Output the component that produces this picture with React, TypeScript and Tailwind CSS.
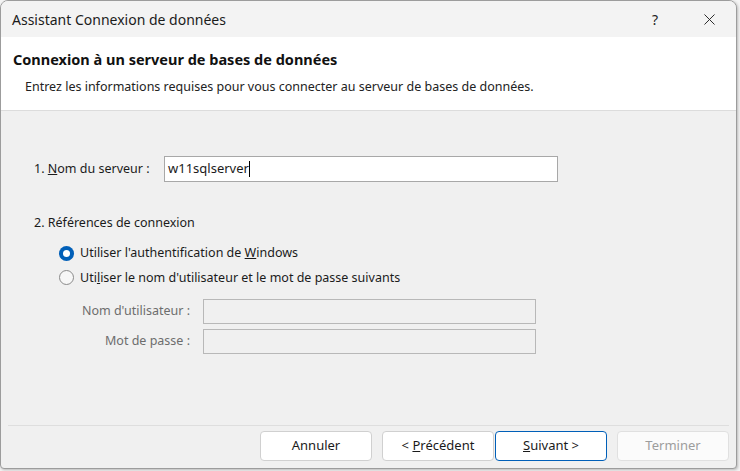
import { X } from "lucide-react";

const font = { fontFamily: '"Noto Sans", "Open Sans", sans-serif' };

const Radio = ({ checked }: { checked: boolean }) =>
  checked ? (
    <span className="w-[15px] h-[15px] rounded-full bg-[#005fb8] flex items-center justify-center shrink-0">
      <span className="w-[7px] h-[7px] rounded-full bg-white" />
    </span>
  ) : (
    <span className="w-[15px] h-[15px] rounded-full border border-[#8a8a8a] bg-[#f7f7f7] shrink-0" />
  );

const Btn = ({ children, primary, disabled }: { children: React.ReactNode; primary?: boolean; disabled?: boolean }) => (
  <button
    className={
      primary
        ? "w-[112px] h-[30px] rounded-[4px] border border-[#005fb8] bg-white text-[13px] text-[#1a1a1a]"
        : disabled
        ? "w-[112px] h-[30px] rounded-[4px] border border-[#e0e0e0] bg-[#fbfbfb] text-[13px] text-[#9d9d9d]"
        : "w-[112px] h-[30px] rounded-[4px] border border-[#d0d0d0] bg-white text-[13px] text-[#1a1a1a]"
    }
  >
    {children}
  </button>
);

export default function App() {
  return (
    <div className="w-[740px] h-[471px] bg-[#f4f4f4]" style={font}>
      <div className="w-[737px] h-[469px] rounded-t-[8px] rounded-b-[4px] border border-[#9c9c9c] bg-[#f0f0f0] flex flex-col overflow-hidden shadow-[1px_1px_3px_rgba(0,0,0,0.25)]">
        {/* title bar */}
        <div className="h-[36px] bg-[#f3f3f3] flex items-center pl-[11px] shrink-0">
          <span className="text-[14px] text-[#1b1b1b]">Assistant Connexion de données</span>
          <span className="ml-auto text-[14px] text-[#222] mr-[42px]">?</span>
          <X className="w-[19px] h-[19px] text-[#222] mr-[17px]" strokeWidth={1.2} />
        </div>
        {/* header */}
        <div className="h-[74px] bg-white border-b border-[#dcdcdc] shrink-0 pt-[12px]">
          <div className="pl-[12px] text-[14.5px] font-bold text-[#111]">Connexion à un serveur de bases de données</div>
          <div className="pl-[24px] mt-[7px] text-[12.5px] text-[#222]">
            Entrez les informations requises pour vous connecter au serveur de bases de données.
          </div>
        </div>
        {/* body */}
        <div className="flex-1 pl-[33px] pt-[45px] text-[12.5px] text-[#1b1b1b]">
          <div className="flex items-center">
            <span className="w-[130px]">
              1. <u>N</u>om du serveur :
            </span>
            <div className="w-[394px] h-[26px] bg-white border border-[#a8a8a8] flex items-center pl-[3px] text-[13px]">
              w11sqlserver<span className="w-px h-[16px] bg-black" />
            </div>
          </div>
          <div className="mt-[32px]">2. Références de connexion</div>
          <div className="mt-[11px] pl-[25px] flex flex-col gap-[6px]">
            <div className="flex items-center gap-[6px]">
              <Radio checked />
              <span>
                Utiliser l'authentification de <u>W</u>indows
              </span>
            </div>
            <div className="flex items-center gap-[6px]">
              <Radio checked={false} />
              <span>
                Uti<u>l</u>iser le nom d'utilisateur et le mot de passe suivants
              </span>
            </div>
          </div>
          <div className="mt-[12px] flex flex-col gap-[5px] text-[#6d6d6d]">
            <div className="flex items-center">
              <span className="w-[169px] text-right pr-[13px]">Nom d'utilisateur :</span>
              <div className="w-[333px] h-[25px] border border-[#b8b8b8] bg-[#f0f0f0]" />
            </div>
            <div className="flex items-center">
              <span className="w-[169px] text-right pr-[13px]">Mot de passe :</span>
              <div className="w-[333px] h-[25px] border border-[#b8b8b8] bg-[#f0f0f0]" />
            </div>
          </div>
        </div>
        {/* footer */}
        <div className="mx-[7px] border-t border-[#dedede] h-[43px] flex items-start justify-end pt-[5px] shrink-0">
          <Btn>Annuler</Btn>
          <div className="ml-[10px]">
            <Btn>
              &lt; <u>P</u>récédent
            </Btn>
          </div>
          <div className="ml-[1px]">
            <Btn primary>
              <u>S</u>uivant &gt;
            </Btn>
          </div>
          <div className="ml-[10px]">
            <Btn disabled>Terminer</Btn>
          </div>
        </div>
      </div>
    </div>
  );
}
